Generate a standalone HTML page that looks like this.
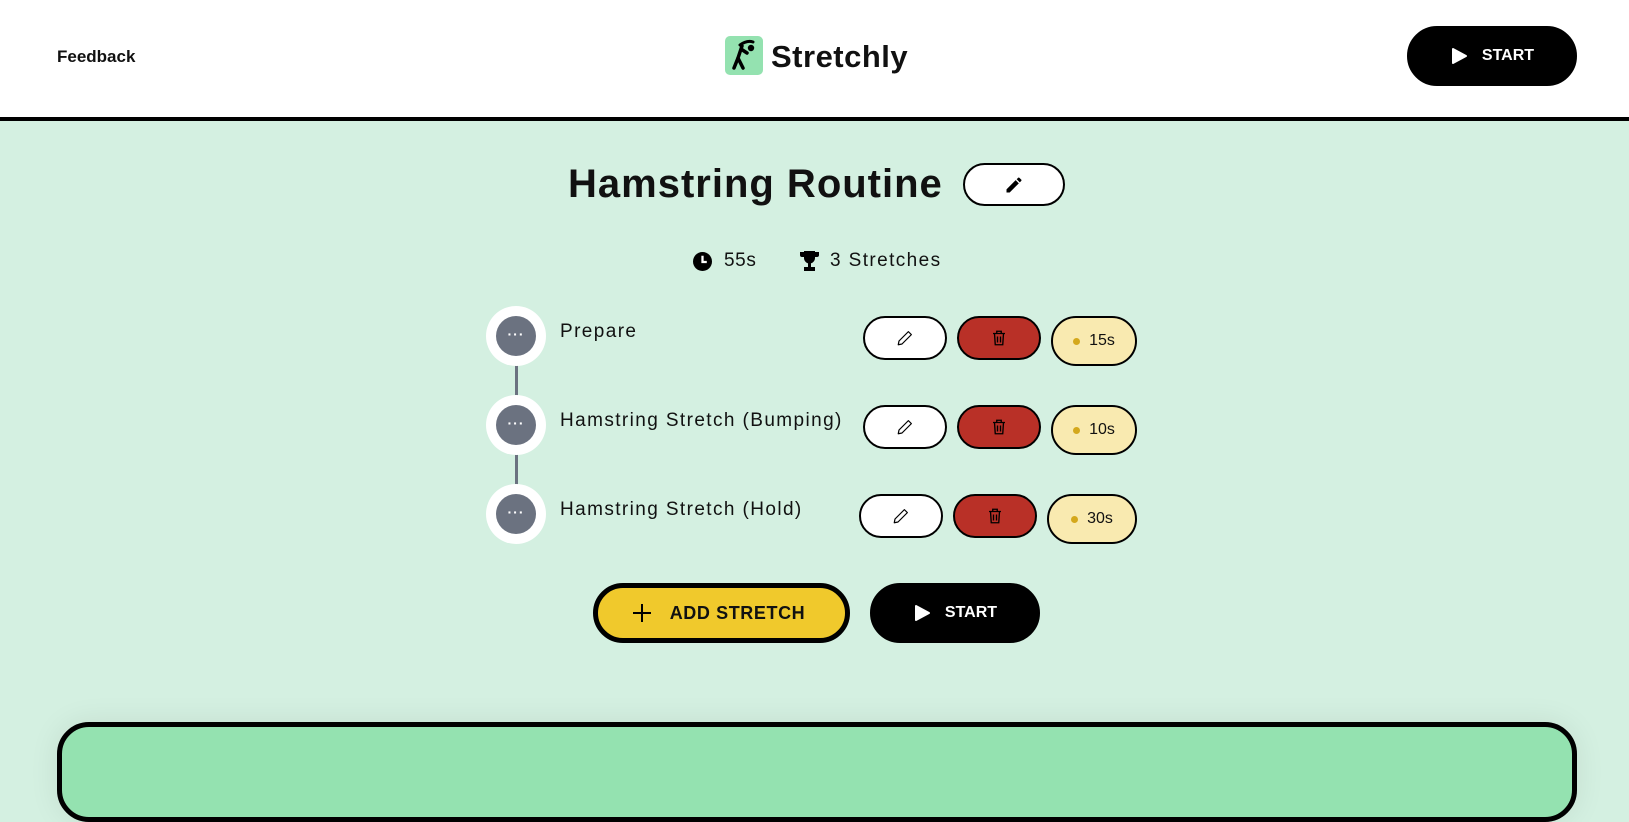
<!DOCTYPE html>
<html><head><meta charset="utf-8"><style>
*{box-sizing:border-box;margin:0;padding:0}
body{width:1629px;height:774px;overflow:hidden;background:#d4f0e1;font-family:"Liberation Sans",sans-serif;position:relative;color:#111}
.a{position:absolute}
.hdr{left:0;top:0;width:1629px;height:121px;background:#fff;border-bottom:4px solid #000}
.pill{position:absolute;border:2px solid #000;border-radius:999px;display:flex;align-items:center;justify-content:center}
.circ{position:absolute;width:60px;height:60px;border-radius:50%;background:#fff;display:flex;align-items:center;justify-content:center}
.circ div{width:40px;height:40px;border-radius:50%;background:#6b7280;color:#fff;font-size:14px;font-weight:bold;display:flex;align-items:center;justify-content:center;letter-spacing:1px;padding-bottom:5px}
.name{position:absolute;left:560px;font-size:19px;color:#111;letter-spacing:1.4px}
.tm{background:#f9eab0;font-size:16px}
.tm i{display:inline-block;width:7px;height:7px;border-radius:50%;background:#d4a81c;margin-right:9px}
.del{background:#b93027}
.ed{background:#fff}
</style></head><body>
<div class="a hdr"></div>
<div class="a" style="left:57px;top:47px;font-size:17px;font-weight:bold">Feedback</div>
<div class="a" style="left:725px;top:36px;width:38px;height:39px;background:#94e2b0;border-radius:5px">
<svg width="38" height="39" viewBox="0 0 38 39"><circle cx="26" cy="12" r="3.2" fill="#000"/><path d="M15 9 Q22 4 28 6" stroke="#000" stroke-width="3" fill="none" stroke-linecap="round"/><path d="M17 10 L13 22 L9 32 M13 22 L18 32 M16 13 L22 17" stroke="#000" stroke-width="3.5" fill="none" stroke-linecap="round"/></svg></div>
<div class="a" style="left:771px;top:39px;font-size:31px;font-weight:bold;letter-spacing:0.5px">Stretchly</div>
<div class="pill" style="left:1407px;top:26px;width:170px;height:60px;background:#000;color:#fff;font-weight:bold;font-size:16px">
<svg width="18" height="18" viewBox="0 0 18 18" style="margin-right:14px"><path d="M3 2 L16 9 L3 16 Z" fill="#fff" stroke="#fff" stroke-width="2" stroke-linejoin="round"/></svg>START</div>

<div class="a" style="left:568px;top:162px;font-size:40px;font-weight:bold;letter-spacing:1px">Hamstring Routine</div>
<div class="pill ed" style="left:963px;top:163px;width:102px;height:43px">
<svg width="20" height="20" viewBox="0 0 24 24"><path d="M3 17.2V21h3.8L17.8 10l-3.8-3.8zM20.7 7a1 1 0 000-1.4l-2.3-2.3a1 1 0 00-1.4 0l-1.8 1.8 3.8 3.8z" fill="#000"/></svg></div>

<svg class="a" style="left:693px;top:252px" width="19" height="19" viewBox="0 0 20 20"><circle cx="10" cy="10" r="10" fill="#000"/><path d="M10 4v6.5h4.5" stroke="#fff" stroke-width="2.4" fill="none"/></svg>
<div class="a" style="left:724px;top:250px;font-size:19px;letter-spacing:0.6px">55s</div>
<svg class="a" style="left:799px;top:250px" width="21" height="22" viewBox="0 0 21 22"><path d="M5 1h11v7a5.5 5.5 0 01-11 0z M1 2h4v5H3a2 2 0 01-2-2z M20 2h-4v5h2a2 2 0 002-2z M9 13h3v4H9z M5 17h11v4H5z" fill="#000"/></svg>
<div class="a" style="left:830px;top:250px;font-size:19px;letter-spacing:1.4px">3 Stretches</div>

<div class="a" style="left:515px;top:360px;width:3px;height:160px;background:#6b7280"></div>

<div class="circ" style="left:486px;top:306px"><div>···</div></div>
<div class="circ" style="left:486px;top:395px"><div>···</div></div>
<div class="circ" style="left:486px;top:484px"><div>···</div></div>
<div class="name" style="top:321px">Prepare</div>
<div class="name" style="top:410px">Hamstring Stretch (Bumping)</div>
<div class="name" style="top:499px">Hamstring Stretch (Hold)</div>

<div class="pill ed" style="left:863px;top:316px;width:84px;height:44px"><svg width="18" height="18" viewBox="0 0 24 24"><path d="M16.5 3.5l4 4L8 20l-5 1 1-5z" stroke="#000" stroke-width="1.6" fill="none" stroke-linejoin="round"/></svg></div>
<div class="pill del" style="left:957px;top:316px;width:84px;height:44px"><svg width="18" height="18" viewBox="0 0 24 24"><path d="M4 6h16M9 6V3h6v3M6 6l1 15h10l1-15M10 10v8M14 10v8" stroke="#000" stroke-width="1.8" fill="none"/></svg></div>
<div class="pill tm" style="left:1051px;top:316px;width:86px;height:50px"><i></i>15s</div>

<div class="pill ed" style="left:863px;top:405px;width:84px;height:44px"><svg width="18" height="18" viewBox="0 0 24 24"><path d="M16.5 3.5l4 4L8 20l-5 1 1-5z" stroke="#000" stroke-width="1.6" fill="none" stroke-linejoin="round"/></svg></div>
<div class="pill del" style="left:957px;top:405px;width:84px;height:44px"><svg width="18" height="18" viewBox="0 0 24 24"><path d="M4 6h16M9 6V3h6v3M6 6l1 15h10l1-15M10 10v8M14 10v8" stroke="#000" stroke-width="1.8" fill="none"/></svg></div>
<div class="pill tm" style="left:1051px;top:405px;width:86px;height:50px"><i></i>10s</div>

<div class="pill ed" style="left:859px;top:494px;width:84px;height:44px"><svg width="18" height="18" viewBox="0 0 24 24"><path d="M16.5 3.5l4 4L8 20l-5 1 1-5z" stroke="#000" stroke-width="1.6" fill="none" stroke-linejoin="round"/></svg></div>
<div class="pill del" style="left:953px;top:494px;width:84px;height:44px"><svg width="18" height="18" viewBox="0 0 24 24"><path d="M4 6h16M9 6V3h6v3M6 6l1 15h10l1-15M10 10v8M14 10v8" stroke="#000" stroke-width="1.8" fill="none"/></svg></div>
<div class="pill tm" style="left:1047px;top:494px;width:90px;height:50px"><i></i>30s</div>

<div class="pill" style="left:593px;top:583px;width:257px;height:60px;background:#f0c92c;border-width:5px;font-weight:bold;font-size:18px;letter-spacing:0.6px">
<svg width="20" height="20" viewBox="0 0 20 20" style="margin-right:18px;margin-left:-6px"><path d="M10 1v18M1 10h18" stroke="#000" stroke-width="2"/></svg>ADD STRETCH</div>
<div class="pill" style="left:870px;top:583px;width:170px;height:60px;background:#000;color:#fff;font-weight:bold;font-size:16px">
<svg width="18" height="18" viewBox="0 0 18 18" style="margin-right:14px"><path d="M3 2 L16 9 L3 16 Z" fill="#fff" stroke="#fff" stroke-width="2" stroke-linejoin="round"/></svg>START</div>

<div class="a" style="left:57px;top:722px;width:1520px;height:100px;background:#94e2b0;border:5px solid #000;border-radius:32px;box-shadow:0 0 30px rgba(0,0,0,0.08)"></div>
</body></html>
